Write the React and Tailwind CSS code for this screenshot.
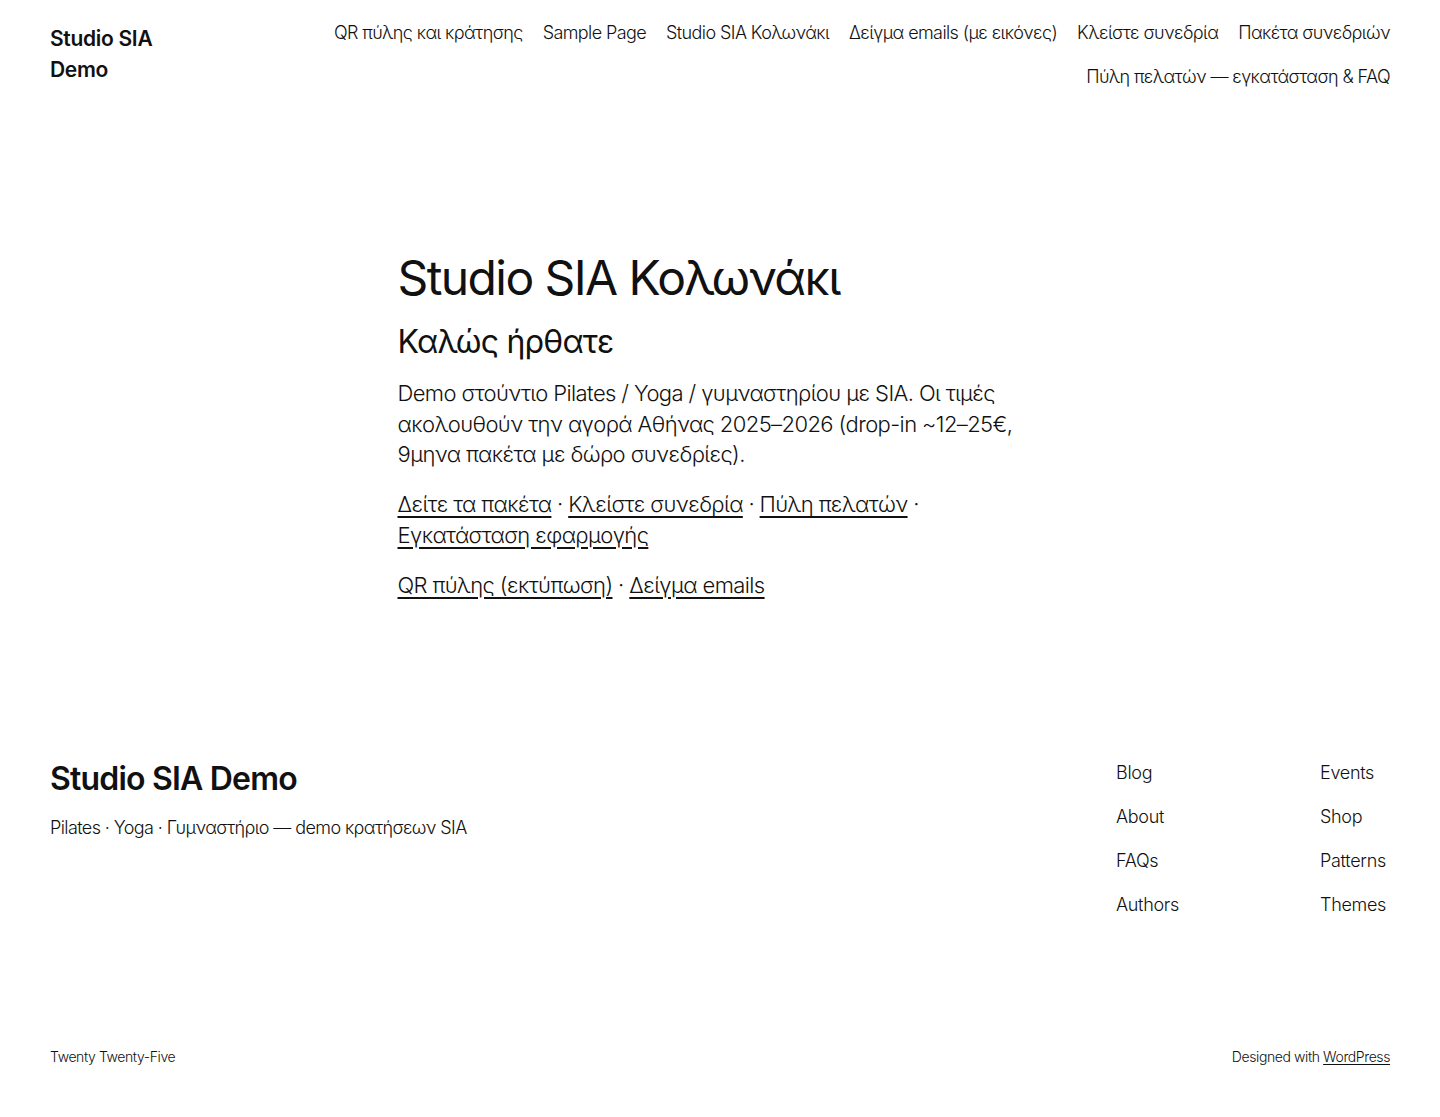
const navItems = [
  'QR πύλης και κράτησης',
  'Sample Page',
  'Studio SIA Κολωνάκι',
  'Δείγμα emails (με εικόνες)',
  'Κλείστε συνεδρία',
  'Πακέτα συνεδριών',
  'Πύλη πελατών — εγκατάσταση & FAQ',
];

const footerCols = [
  ['Blog', 'About', 'FAQs', 'Authors'],
  ['Events', 'Shop', 'Patterns', 'Themes'],
];

const Dot = () => <span> · </span>;

const App = () => {
  return (
    <div className="flex min-h-[1117px] flex-col bg-white font-['Inter','Noto_Sans',sans-serif] text-[#111111]">
      <header className="flex items-center justify-between gap-8 px-[50px] py-5">
        <a href="#" className="w-[150px] shrink-0 text-[21px] font-semibold leading-[1.45] tracking-[-0.3px]">
          Studio SIA Demo
        </a>
        <nav className="flex max-w-[1110px] flex-wrap justify-end gap-x-5 gap-y-[19px] text-[18px] font-light leading-[1.4] tracking-[-0.6px]">
          {navItems.map((item) => (
            <a key={item} href="#" className="whitespace-nowrap">
              {item}
            </a>
          ))}
        </nav>
      </header>

      <main className="mx-auto w-[645px] pb-[159px] pt-[142px]">
        <h1 className="text-[48px] font-normal leading-[1.125] tracking-[-1.6px]">Studio SIA Κολωνάκι</h1>
        <h2 className="mt-[18px] text-[32px] font-normal leading-[1.2] tracking-[-0.8px]">Καλώς ήρθατε</h2>
        <div className="mt-[16px] flex flex-col gap-[19px] text-[22px] font-light leading-[1.4] tracking-[-0.6px]">
          <p>
            Demo στούντιο Pilates / Yoga / γυμναστηρίου με SIA. Οι τιμές ακολουθούν την αγορά Αθήνας 2025–2026
            (drop-in ~12–25€, 9μηνα πακέτα με δώρο συνεδρίες).
          </p>
          <p className="pr-[40px]">
            <a href="#" className="underline underline-offset-4">Δείτε τα πακέτα</a>
            <Dot />
            <a href="#" className="underline underline-offset-4">Κλείστε συνεδρία</a>
            <Dot />
            <a href="#" className="underline underline-offset-4">Πύλη πελατών</a>
            <Dot />
            <a href="#" className="underline underline-offset-4">Εγκατάσταση εφαρμογής</a>
          </p>
          <p>
            <a href="#" className="underline underline-offset-4">QR πύλης (εκτύπωση)</a>
            <Dot />
            <a href="#" className="underline underline-offset-4">Δείγμα emails</a>
          </p>
        </div>
      </main>

      <footer className="px-[50px]">
        <div className="flex justify-between">
          <div>
            <a href="#" className="block text-[32px] font-semibold leading-[1.2] tracking-[-0.8px]">
              Studio SIA Demo
            </a>
            <p className="mt-[17px] text-[18px] font-light leading-[1.4] tracking-[-0.6px]">
              Pilates · Yoga · Γυμναστήριο — demo κρατήσεων SIA
            </p>
          </div>
          <div className="flex">
            {footerCols.map((col, i) => (
              <ul
                key={i}
                className={`flex flex-col gap-[19px] text-[18px] font-light leading-[1.4] tracking-[-0.3px] ${i === 0 ? 'w-[204px]' : 'w-[70px]'}`}
              >
                {col.map((link) => (
                  <li key={link}>
                    <a href="#" className="whitespace-nowrap">{link}</a>
                  </li>
                ))}
              </ul>
            ))}
          </div>
        </div>
        <div className="flex justify-between pb-[50px] pt-[130px] text-[14px] font-light leading-[1.4] tracking-[-0.4px]">
          <p>Twenty Twenty-Five</p>
          <p>
            Designed with{' '}
            <a href="#" className="underline underline-offset-2">WordPress</a>
          </p>
        </div>
      </footer>
    </div>
  );
};

export default App;
